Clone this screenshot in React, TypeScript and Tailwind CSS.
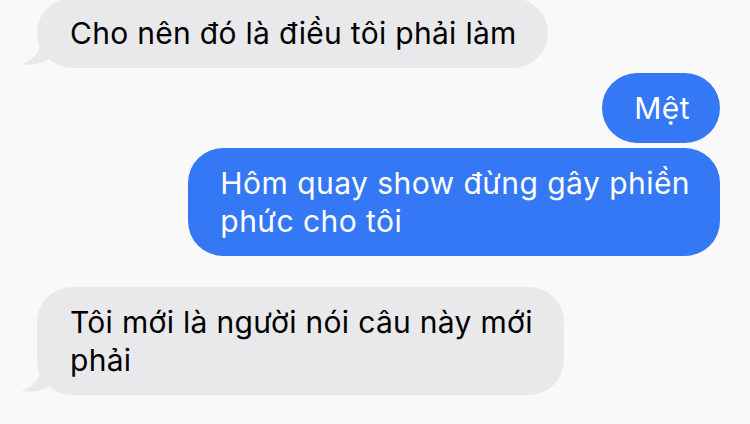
import React from "react";

function Tail() {
  return (
    <svg
      className="absolute left-[-16px] bottom-0"
      width="40"
      height="30"
      viewBox="0 0 40 30"
      fill="#e9e9eb"
    >
      <path d="M20 0 C20 12 14 22 0 26 C10 28 20 26 28 21 C32 24 36 26 40 27 L40 0 Z" />
    </svg>
  );
}

function Left({ children }: { children: React.ReactNode }) {
  return (
    <div className="flex justify-start pl-[37px]">
      <div className="relative">
        <Tail />
        <div className="relative rounded-[35px] bg-[#e9e9eb] pl-[33px] pr-[31px] py-[16px] text-[30px] tracking-[0.3px] leading-[38px] text-black">
          {children}
        </div>
      </div>
    </div>
  );
}

function Right({ children }: { children: React.ReactNode }) {
  return (
    <div className="flex justify-end pr-[30px]">
      <div className="rounded-[35px] bg-[#3478f6] pl-[32px] pr-[30px] py-[16px] text-[30px] tracking-[0.45px] leading-[38px] text-white">
        {children}
      </div>
    </div>
  );
}

export default function App() {
  return (
    <div
      className="w-[750px] h-[424px] overflow-hidden bg-[#f9f9f9] flex flex-col"
      style={{ fontFamily: "Inter, 'Noto Sans', sans-serif" }}
    >
      <div className="mt-[-2px]">
        <Left>Cho nên đó là điều tôi phải làm</Left>
      </div>
      <div className="mt-[5px]">
        <Right>Mệt</Right>
      </div>
      <div className="mt-[5px]">
        <Right>
          Hôm quay show đừng gây phiền
          <br />
          phức cho tôi
        </Right>
      </div>
      <div className="mt-[31px]">
        <Left>
          Tôi mới là người nói câu này mới
          <br />
          phải
        </Left>
      </div>
    </div>
  );
}
